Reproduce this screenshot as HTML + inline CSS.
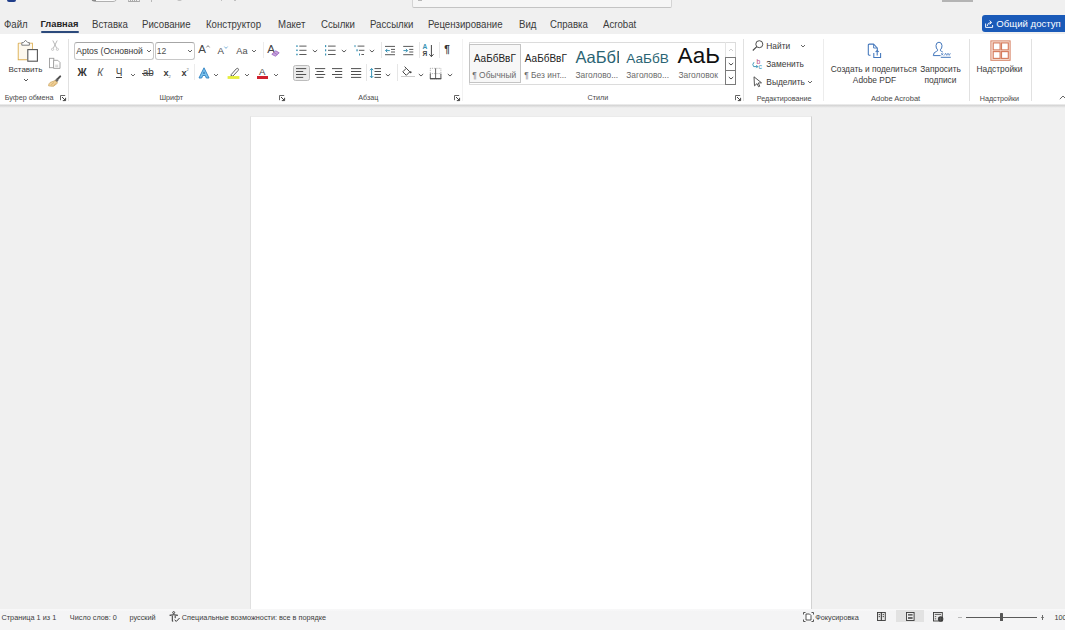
<!DOCTYPE html>
<html><head><meta charset="utf-8">
<style>
html,body{margin:0;padding:0;width:1065px;height:630px;overflow:hidden;background:#f0f0f0;position:relative;font-family:"Liberation Sans",sans-serif}
.a{position:absolute}
.t{position:absolute;white-space:nowrap;line-height:1;color:#424242}
.tab{font-size:10px;top:20px;color:#3b3b3b;transform:scaleX(0.965);transform-origin:0 0}
.btn{font-size:8.4px;color:#3a3a3a}
.gl{font-size:7.2px;top:94.2px;color:#4a4a4a}
.st{font-size:7.3px;top:614px;color:#3d3d3d}
.sep{position:absolute;width:1px;background:#e1e1e1}
svg{position:absolute;overflow:visible}
</style></head><body>
<!-- title/tab area -->
<div class="a" style="left:0;top:0;width:1065px;height:34px;background:#f0f0f0"></div>
<div class="a" style="left:7px;top:-3px;width:9px;height:5px;background:#1f3d8a;border-radius:0 0 2px 2px"></div>
<div class="a" style="left:89.5px;top:-8px;width:28px;height:10.3px;border:1px solid #b0b0b0;border-radius:6px;background:#fbfbfb;box-sizing:border-box"></div>
<div class="a" style="left:92px;top:0;width:4px;height:1px;background:#8a8a8a"></div>
<div class="a" style="left:127.5px;top:0;width:12px;height:2px;border-bottom:1px solid #a8a8a8;border-left:1px solid #b8b8b8;border-right:1px solid #b8b8b8;box-sizing:border-box"></div>
<div class="a" style="left:130px;top:0;width:7px;height:1.2px;background:repeating-linear-gradient(90deg,#aaa 0 1px,transparent 1px 2px)"></div>
<div class="a" style="left:150.5px;top:0;width:1px;height:1.5px;background:#b8b8b8"></div>
<div class="a" style="left:176px;top:-6px;width:7px;height:7px;border:1px solid #b0b0b0;border-radius:50%;box-sizing:border-box"></div>
<div class="a" style="left:221px;top:0;width:1px;height:1.3px;background:#c0c0c0"></div>
<div class="a" style="left:233.5px;top:0;width:2px;height:1.3px;background:#c0c0c0"></div>
<div class="a" style="left:412px;top:-6px;width:260px;height:13.5px;border:1px solid #d4d4d4;border-bottom-color:#c4c4c4;border-radius:2px;background:#f6f6f6;box-sizing:border-box"></div>
<div class="a" style="left:418px;top:0;width:4px;height:1.2px;background:#b8b8b8"></div>
<div class="a" style="left:942px;top:-2px;width:31px;height:3.5px;background:#b4b4b4"></div>

<div class="t tab" style="left:4px">Файл</div>
<div class="t tab" style="left:40.5px;font-weight:700;font-size:9.3px;top:20.2px;color:#242424;transform:none">Главная</div>
<div class="a" style="left:41px;top:31px;width:38px;height:1.8px;background:#2c4a7c;border-radius:1px"></div>
<div class="t tab" style="left:92.3px">Вставка</div>
<div class="t tab" style="left:141.5px">Рисование</div>
<div class="t tab" style="left:205.7px">Конструктор</div>
<div class="t tab" style="left:277.9px">Макет</div>
<div class="t tab" style="left:321.1px">Ссылки</div>
<div class="t tab" style="left:369.9px">Рассылки</div>
<div class="t tab" style="left:428.1px">Рецензирование</div>
<div class="t tab" style="left:518.7px">Вид</div>
<div class="t tab" style="left:550.2px">Справка</div>
<div class="t tab" style="left:603.2px">Acrobat</div>

<div class="a" style="left:982px;top:15px;width:90px;height:17px;background:#1a5ab8;border-radius:3px"></div>
<svg style="left:984.5px;top:19px" width="9" height="9" viewBox="0 0 9 9"><path d="M0.6 4.5 V8.4 H7.6 V6" fill="none" stroke="#fff" stroke-width="0.95"/><path d="M2.2 7 Q2.4 3.6 6 3.5 M4.6 1.6 L6.7 3.5 L4.6 5.3" fill="none" stroke="#fff" stroke-width="0.95"/></svg>
<div class="t" style="left:996.3px;top:18.8px;font-size:9.6px;color:#fff">Общий доступ</div>

<!-- ribbon -->
<div class="a" style="left:0;top:34px;width:1065px;height:71px;background:#fff"></div>
<div class="a" style="left:0;top:104px;width:1065px;height:4px;background:linear-gradient(#f4f4f4,#d6d6d6 35%,#dadada 50%,#e9e9e9 80%,#f0f0f0)"></div>

<!-- page -->
<div class="a" style="left:250px;top:116px;width:562px;height:493px;background:#fff;border-left:1px solid #e0e0e0;border-right:1px solid #d2d2d2;border-top:1px solid #ebebeb;box-sizing:border-box"></div>

<!-- status bar -->
<div class="a" style="left:0;top:609px;width:1065px;height:21px;background:#f4f4f5"></div>
<div class="a" style="left:0;top:609px;width:1065px;height:2px;background:linear-gradient(#f8f8f8,#f6f6f7)"></div>


<!-- Clipboard group -->
<svg style="left:0;top:0" width="1" height="1"></svg>
<svg style="left:17px;top:39px" width="22" height="24" viewBox="0 0 22 24">
  <path d="M1.3 4.3 H4.5 M12.5 4.3 H15.3 V10 M10 20.6 H1.3 V4.3" fill="#fdf8ee" stroke="#dcae52" stroke-width="1.1"/>
  <path d="M1.8 4.8 H15 V10.3 H10.3 V20.3 H1.8 Z" fill="#fdf8ee"/>
  <path d="M4.8 6.2 V3.6 H6.4 L8.6 1.3 L10.8 3.6 H12.4 V6.2 Z" fill="#fff" stroke="#777" stroke-width="0.95" stroke-linejoin="round"/>
  <rect x="10.8" y="10.6" width="9.6" height="11.6" fill="#fff" stroke="#555" stroke-width="1.1"/>
</svg>
<div class="t btn" style="left:8.5px;top:65.9px;font-size:8px">Вставить</div>
<svg style="left:23px;top:78px" width="6" height="4" viewBox="0 0 6 4"><path d="M1 1 L3 3 L5 1" fill="none" stroke="#555" stroke-width="1"/></svg>
<svg style="left:50px;top:40px" width="10" height="11" viewBox="0 0 10 11">
  <path d="M2.8 0.5 L6.6 8 M7.2 0.5 L3.4 8" stroke="#ababab" stroke-width="0.85" fill="none"/>
  <circle cx="2.6" cy="9.3" r="1.1" fill="none" stroke="#b8b8b8" stroke-width="0.8"/>
  <circle cx="7.4" cy="9.3" r="1.1" fill="none" stroke="#b8b8b8" stroke-width="0.8"/>
</svg>
<svg style="left:48px;top:57px" width="14" height="13" viewBox="0 0 14 13">
  <rect x="1.5" y="1.3" width="4.3" height="9.4" fill="#fff" stroke="#9c9c9c" stroke-width="0.9"/>
  <path d="M5.6 3.3 H9.8 L12 5.5 V11.4 H5.6 Z" fill="#fff" stroke="#9c9c9c" stroke-width="0.9"/>
  <path d="M7.2 8.2 H10.2 M7.2 9.7 H10.2" stroke="#b8b8b8" stroke-width="0.7"/>
</svg>
<svg style="left:47px;top:75px" width="15" height="12" viewBox="0 0 15 12">
  <path d="M13.2 1.4 L10.4 4.2" stroke="#505050" stroke-width="2" stroke-linecap="round"/>
  <path d="M10.6 4.6 L8.6 6.6" stroke="#6a6a6a" stroke-width="2.8"/>
  <path d="M8.2 5.6 L10.6 8 L6.6 11.2 Q3.8 11.4 1.5 10.8 Q1.6 8.6 3.2 7.4 Z" fill="#f0d098" stroke="#c9a05a" stroke-width="0.7" stroke-linejoin="round"/>
  <path d="M4.2 9.9 L7 7.4 M6.6 10.6 L8.8 8.6" stroke="#c9a05a" stroke-width="0.6"/>
</svg>
<div class="t gl" style="left:4.7px;top:94.4px">Буфер обмена</div>
<svg style="left:60px;top:95px" width="7" height="7" viewBox="0 0 7 7"><path d="M0.5 5.2 V0.5 H5.2" fill="none" stroke="#555" stroke-width="0.9"/><path d="M2 2 L5.3 5.3 M2.8 5.6 H5.6 V2.8" fill="none" stroke="#444" stroke-width="1"/></svg>
<div class="sep" style="left:68px;top:39px;height:62px"></div>

<!-- Font group -->
<div class="a" style="left:74px;top:42px;width:79.5px;height:17.5px;border:1px solid #c8c8c8;border-top-color:#a6a6a6;border-radius:3px;box-sizing:border-box"></div>
<div class="t btn" style="left:76.2px;top:47.2px;font-size:8.6px">Aptos (Основной</div>
<svg style="left:146px;top:49px" width="6" height="4" viewBox="0 0 6 4"><path d="M1 1 L3 3 L5 1" fill="none" stroke="#555" stroke-width="0.9"/></svg>
<div class="a" style="left:155px;top:42px;width:39.5px;height:17.5px;border:1px solid #c8c8c8;border-top-color:#a6a6a6;border-radius:3px;box-sizing:border-box"></div>
<div class="t btn" style="left:156.7px;top:46.9px;font-size:8.6px;color:#505050">12</div>
<svg style="left:187px;top:49px" width="6" height="4" viewBox="0 0 6 4"><path d="M1 1 L3 3 L5 1" fill="none" stroke="#555" stroke-width="0.9"/></svg>

<div class="t" style="left:198.3px;top:44.2px;font-size:11.5px;color:#444">A</div>
<svg style="left:206.3px;top:45.3px" width="4" height="3" viewBox="0 0 4 3"><path d="M0.4 2.4 L2 0.6 L3.6 2.4" fill="none" stroke="#666" stroke-width="0.8"/></svg>
<div class="t" style="left:217.6px;top:46.3px;font-size:9.7px;color:#444">A</div>
<svg style="left:224.3px;top:45.5px" width="4" height="3" viewBox="0 0 4 3"><path d="M0.4 0.6 L2 2.4 L3.6 0.6" fill="none" stroke="#5aa0d0" stroke-width="0.8"/></svg>
<div class="t" style="left:236.3px;top:46.8px;font-size:9.2px;color:#4a4a4a">Aa</div>
<svg style="left:251px;top:49px" width="6" height="4" viewBox="0 0 6 4"><path d="M1 1 L3 3 L5 1" fill="none" stroke="#555" stroke-width="0.9"/></svg>
<div class="sep" style="left:263px;top:42px;height:16px;background:#ececec"></div>
<div class="t" style="left:267.3px;top:44.2px;font-size:11.5px;color:#444">A</div>
<svg style="left:271px;top:49.5px" width="9" height="7" viewBox="0 0 9 7"><path d="M0.8 4.3 L4.8 0.8 L8.2 2.8 L4.5 6.2 Z" fill="#c7a6dc" stroke="#9a62c0" stroke-width="0.8"/><path d="M2.8 2.5 L6.3 4.7" stroke="#9a62c0" stroke-width="0.7"/></svg>

<div class="t" style="left:77.4px;top:68px;font-size:10.2px;font-weight:700;color:#333">Ж</div>
<div class="t" style="left:97.3px;top:68px;font-size:10px;font-style:italic;color:#555">К</div>
<div class="t" style="left:115.8px;top:67.8px;font-size:10px;color:#444">Ч</div>
<div class="a" style="left:115.8px;top:77px;width:6.5px;height:1px;background:#444"></div>
<svg style="left:129.5px;top:72.6px" width="6" height="4" viewBox="0 0 6 4"><path d="M1 1 L3 3 L5 1" fill="none" stroke="#555" stroke-width="0.9"/></svg>
<div class="t" style="left:142.8px;top:68.2px;font-size:10px;color:#444">ab</div>
<div class="a" style="left:141.8px;top:73.3px;width:11.6px;height:1px;background:#444"></div>
<div class="t" style="left:163.6px;top:68.8px;font-size:9.2px;font-weight:700;color:#3a3a3a">x</div><div class="t" style="left:168.6px;top:74.5px;font-size:4px;color:#666">2</div>
<div class="t" style="left:181.6px;top:68.8px;font-size:9.2px;font-weight:700;color:#3a3a3a">x</div><div class="t" style="left:186.6px;top:67.6px;font-size:4px;color:#666">2</div>
<div class="sep" style="left:194px;top:64px;height:16px;background:#ececec"></div>
<svg style="left:198px;top:67px" width="12" height="12" viewBox="0 0 12 12"><path d="M1 11 L6 0.8 L11 11 H8.3 L7.3 8.5 H4.7 L3.7 11 Z M5.3 6.5 H6.7 L6 4.8 Z" fill="#7cc4ee" stroke="#2d7fc0" stroke-width="0.9" stroke-linejoin="round"/></svg>
<svg style="left:213px;top:72.8px" width="6" height="4" viewBox="0 0 6 4"><path d="M1 1 L3 3 L5 1" fill="none" stroke="#555" stroke-width="0.9"/></svg>
<svg style="left:227px;top:67px" width="13" height="13" viewBox="0 0 13 13"><path d="M4.2 7.6 L9.3 1.8 Q10.4 0.9 11.2 1.7 Q11.9 2.6 11 3.6 L6 9 L4.6 9.4 Z" fill="#fff" stroke="#505050" stroke-width="0.9" stroke-linejoin="round"/><path d="M4.4 8.6 L2.8 9.8" stroke="#505050" stroke-width="0.9"/><rect x="0.6" y="9.1" width="11.8" height="2.8" fill="#e6ee3c"/></svg>
<svg style="left:244px;top:72.8px" width="6" height="4" viewBox="0 0 6 4"><path d="M1 1 L3 3 L5 1" fill="none" stroke="#555" stroke-width="0.9"/></svg>
<div class="t" style="left:258.9px;top:67px;font-size:9.6px;color:#444">A</div>
<div class="a" style="left:256.7px;top:76.3px;width:11.5px;height:2.6px;background:#d0202e"></div>
<svg style="left:273px;top:72.8px" width="6" height="4" viewBox="0 0 6 4"><path d="M1 1 L3 3 L5 1" fill="none" stroke="#555" stroke-width="0.9"/></svg>
<div class="t gl" style="left:159.5px">Шрифт</div>
<svg style="left:279px;top:95px" width="7" height="7" viewBox="0 0 7 7"><path d="M0.5 5.2 V0.5 H5.2" fill="none" stroke="#555" stroke-width="0.9"/><path d="M2 2 L5.3 5.3 M2.8 5.6 H5.6 V2.8" fill="none" stroke="#444" stroke-width="1"/></svg>

<svg style="left:295px;top:44px" width="14" height="13" viewBox="0 0 14 13"><rect x="1.2" y="1.35" width="1.5" height="1.5" fill="#3a93b5"/><rect x="4.3" y="1.6" width="7.2" height="1" fill="#5a5a5a"/><rect x="1.2" y="5.55" width="1.5" height="1.5" fill="#3a93b5"/><rect x="4.3" y="5.8" width="7.2" height="1" fill="#5a5a5a"/><rect x="1.2" y="9.75" width="1.5" height="1.5" fill="#3a93b5"/><rect x="4.3" y="10.0" width="7.2" height="1" fill="#5a5a5a"/></svg><svg style="left:312px;top:49.3px" width="6" height="4" viewBox="0 0 6 4"><path d="M0.8 1 L3 3 L5.2 1" fill="none" stroke="#505050" stroke-width="0.95"/></svg><svg style="left:324px;top:44px" width="13" height="13" viewBox="0 0 13 13"><rect x="1" y="1.1" width="1.2" height="2" fill="#3a93b5"/><rect x="4" y="1.6" width="7.6" height="1" fill="#5a5a5a"/><rect x="1" y="5.3" width="1.2" height="2" fill="#3a93b5"/><rect x="4" y="5.8" width="7.6" height="1" fill="#5a5a5a"/><rect x="1" y="9.5" width="1.2" height="2" fill="#3a93b5"/><rect x="4" y="10.0" width="7.6" height="1" fill="#5a5a5a"/></svg><svg style="left:341px;top:49.3px" width="6" height="4" viewBox="0 0 6 4"><path d="M0.8 1 L3 3 L5.2 1" fill="none" stroke="#505050" stroke-width="0.95"/></svg><svg style="left:353px;top:44px" width="13" height="13" viewBox="0 0 13 13"><rect x="1.5" y="1.1" width="1" height="2" fill="#3a93b5"/><rect x="4.6" y="1.6" width="6.800000000000001" height="1" fill="#5a5a5a"/><rect x="3.4" y="5.3" width="1.3" height="2" fill="#3a93b5"/><rect x="5.9" y="5.8" width="5.5" height="1" fill="#5a5a5a"/><rect x="6" y="9.5" width="1" height="2" fill="#3a93b5"/><rect x="8.4" y="10.0" width="2.5999999999999996" height="1" fill="#5a5a5a"/></svg><svg style="left:369px;top:49.3px" width="6" height="4" viewBox="0 0 6 4"><path d="M0.8 1 L3 3 L5.2 1" fill="none" stroke="#505050" stroke-width="0.95"/></svg><div class="sep" style="left:380.5px;top:42px;height:16px;background:#e6e6e6"></div><svg style="left:384px;top:44px" width="12" height="12" viewBox="0 0 12 12"><rect x="1" y="1.9" width="10" height="1" fill="#5a5a5a"/><rect x="7" y="4.9" width="4" height="1" fill="#5a5a5a"/><rect x="7" y="7.5" width="4" height="1" fill="#5a5a5a"/><rect x="1" y="10.2" width="10" height="1" fill="#5a5a5a"/><path d="M5.8 6.6 H1.6 M3.3 4.9 L1.6 6.6 L3.3 8.3" fill="none" stroke="#3a93b5" stroke-width="1"/></svg><svg style="left:402px;top:44px" width="12" height="12" viewBox="0 0 12 12"><rect x="1.2" y="1.9" width="10.100000000000001" height="1" fill="#5a5a5a"/><rect x="7.2" y="4.9" width="4.1000000000000005" height="1" fill="#5a5a5a"/><rect x="7.2" y="7.5" width="4.1000000000000005" height="1" fill="#5a5a5a"/><rect x="1.2" y="10.2" width="10.100000000000001" height="1" fill="#5a5a5a"/><path d="M1.4 6.6 H5.6 M3.9 4.9 L5.6 6.6 L3.9 8.3" fill="none" stroke="#3a93b5" stroke-width="1"/></svg><div class="sep" style="left:419px;top:42px;height:16px;background:#e6e6e6"></div><div class="t" style="left:422.4px;top:44.2px;font-size:6.6px;color:#3a93b5;font-weight:700">A</div><div class="t" style="left:422.6px;top:51.4px;font-size:6.6px;color:#444;font-weight:700">Я</div><svg style="left:428px;top:44px" width="7" height="14" viewBox="0 0 7 14"><path d="M3.4 1 V12.6 M1.3 10.3 L3.4 12.6 L5.5 10.3" fill="none" stroke="#444" stroke-width="1"/></svg><div class="sep" style="left:438.5px;top:42px;height:16px;background:#e6e6e6"></div><div class="t" style="left:444.3px;top:45.2px;font-size:10px;color:#333;font-weight:700">¶</div><div class="a" style="left:293.4px;top:65px;width:16.5px;height:16.4px;background:#ebebeb;border:1px solid #bcbcbc;border-radius:2.5px;box-sizing:border-box"></div><svg style="left:296.3px;top:66px" width="12" height="14" viewBox="0 0 12 14"><rect x="0" y="2.1" width="10.2" height="1" fill="#505050"/><rect x="0" y="5.0" width="7.2" height="1" fill="#505050"/><rect x="0" y="8.0" width="10.2" height="1" fill="#505050"/><rect x="0" y="10.9" width="7.2" height="1" fill="#505050"/></svg><svg style="left:314.5px;top:66px" width="12" height="14" viewBox="0 0 12 14"><rect x="0.0" y="2.1" width="10.2" height="1" fill="#505050"/><rect x="1.4999999999999996" y="5.0" width="7.199999999999999" height="1" fill="#505050"/><rect x="0.0" y="8.0" width="10.2" height="1" fill="#505050"/><rect x="1.4999999999999996" y="10.9" width="7.199999999999999" height="1" fill="#505050"/></svg><svg style="left:332.3px;top:66px" width="12" height="14" viewBox="0 0 12 14"><rect x="0.0" y="2.1" width="10.2" height="1" fill="#505050"/><rect x="2.999999999999999" y="5.0" width="7.2" height="1" fill="#505050"/><rect x="0.0" y="8.0" width="10.2" height="1" fill="#505050"/><rect x="2.999999999999999" y="10.9" width="7.2" height="1" fill="#505050"/></svg><svg style="left:350.8px;top:66px" width="12" height="14" viewBox="0 0 12 14"><rect x="0" y="2.1" width="10.2" height="1" fill="#505050"/><rect x="0" y="5.0" width="10.2" height="1" fill="#505050"/><rect x="0" y="8.0" width="10.2" height="1" fill="#505050"/><rect x="0" y="10.9" width="10.2" height="1" fill="#505050"/></svg><div class="sep" style="left:365.5px;top:64px;height:17px;background:#e6e6e6"></div><svg style="left:369px;top:66px" width="13" height="14" viewBox="0 0 13 14"><path d="M2.6 2.5 V11.8 M1 4.2 L2.6 2.5 L4.2 4.2 M1 10.1 L2.6 11.8 L4.2 10.1" fill="none" stroke="#3a93b5" stroke-width="1"/><rect x="5.5" y="2.1" width="6.5" height="1" fill="#505050"/><rect x="5.5" y="5.0" width="6.5" height="1" fill="#505050"/><rect x="5.5" y="8.0" width="6.5" height="1" fill="#505050"/><rect x="5.5" y="10.9" width="6.5" height="1" fill="#505050"/></svg><svg style="left:385.2px;top:72.8px" width="6" height="4" viewBox="0 0 6 4"><path d="M0.8 1 L3 3 L5.2 1" fill="none" stroke="#505050" stroke-width="0.95"/></svg><div class="sep" style="left:396.5px;top:64px;height:17px;background:#e6e6e6"></div><svg style="left:400px;top:66px" width="16" height="12" viewBox="0 0 16 12"><path d="M2.8 5.8 L6.3 2.3 L9.8 5.8 L6.3 9.3 Z" fill="#fff" stroke="#444" stroke-width="1"/><path d="M6.3 2.3 L4.6 0.6" stroke="#444" stroke-width="1"/><circle cx="10.6" cy="6.2" r="1" fill="#444"/><rect x="1" y="10" width="14" height="0.9" fill="#c8c8c8"/></svg><svg style="left:417.5px;top:72.8px" width="6" height="4" viewBox="0 0 6 4"><path d="M0.8 1 L3 3 L5.2 1" fill="none" stroke="#505050" stroke-width="0.95"/></svg><svg style="left:429px;top:67px" width="13" height="13" viewBox="0 0 13 13"><rect x="1.3" y="1.3" width="10.6" height="10.6" fill="none" stroke="#9a9a9a" stroke-width="0.8" stroke-dasharray="0.9 0.9"/><path d="M1.3 6.6 H11.9" stroke="#9a9a9a" stroke-width="0.8" stroke-dasharray="0.9 0.9"/><path d="M6.6 1.3 V11.9" stroke="#555" stroke-width="0.9"/><path d="M1 11.7 H12.2" stroke="#444" stroke-width="1.2"/><path d="M1.3 6.6 V11.9 M11.9 6.6 V11.9" stroke="#555" stroke-width="0.9"/></svg><svg style="left:446.5px;top:72.8px" width="6" height="4" viewBox="0 0 6 4"><path d="M0.8 1 L3 3 L5.2 1" fill="none" stroke="#505050" stroke-width="0.95"/></svg><div class="t gl" style="left:358.3px">Абзац</div><svg style="left:454px;top:95px" width="7" height="7" viewBox="0 0 7 7"><path d="M0.5 5.2 V0.5 H5.2" fill="none" stroke="#555" stroke-width="0.9"/><path d="M2 2 L5.3 5.3 M2.8 5.6 H5.6 V2.8" fill="none" stroke="#444" stroke-width="1"/></svg><div class="sep" style="left:461.5px;top:39px;height:62px;background:#f2f2f2"></div><div class="a" style="left:468.5px;top:42px;width:267px;height:42.5px;border:1px solid #dcdcdc;box-sizing:border-box;background:#fff"></div><div class="a" style="left:469px;top:43.5px;width:51.5px;height:39px;border:1px solid #c4c4c4;box-sizing:border-box;background:#f7f7f7"></div><div class="t" style="left:473.8px;top:53.8px;font-size:10px;color:#222">АаБбВвГ</div><div class="t" style="left:472.3px;top:71.2px;font-size:8.4px;color:#6a6a6a">¶ Обычный</div><div class="t" style="left:524.8px;top:53.8px;font-size:10px;color:#222">АаБбВвГ</div><div class="t" style="left:524.3px;top:71.2px;font-size:8.4px;color:#6a6a6a">¶ Без инт...</div><div class="a" style="left:575px;top:45px;width:44px;height:22px;overflow:hidden"><div class="t" style="left:0.4px;top:3.5px;font-size:16.5px;color:#2a6473">АаБбВ</div></div><div class="t" style="left:575.5px;top:71.2px;font-size:8.4px;color:#6a6a6a">Заголово...</div><div class="t" style="left:626.3px;top:51.6px;font-size:13.6px;color:#2a6473">АаБбВ</div><div class="t" style="left:626.3px;top:71.2px;font-size:8.4px;color:#6a6a6a">Заголово...</div><div class="t" style="left:677.6px;top:44.9px;font-size:22.5px;color:#111">АаЬ</div><div class="t" style="left:678.5px;top:71.2px;font-size:8.4px;color:#6a6a6a">Заголовок</div><div class="a" style="left:725px;top:42px;width:10.5px;height:42.5px;border-left:1px solid #e4e4e4;box-sizing:border-box"></div><svg style="left:727.5px;top:48px" width="6" height="4" viewBox="0 0 6 4"><path d="M1 3 L3 1 L5 3" fill="none" stroke="#c8c8c8" stroke-width="0.9"/></svg><div class="a" style="left:725px;top:57px;width:10.8px;height:27.6px;border:1px solid #7a7a7a;box-sizing:border-box;background:#fff"></div>
<div class="a" style="left:725px;top:70px;width:10.8px;height:1px;background:#7a7a7a"></div>
<svg style="left:727.6px;top:62.3px" width="6" height="4" viewBox="0 0 6 4"><path d="M0.8 1 L3 3 L5.2 1" fill="none" stroke="#444" stroke-width="0.95"/></svg>
<svg style="left:727.6px;top:76px" width="6" height="4" viewBox="0 0 6 4"><path d="M0.8 1 L3 3 L5.2 1" fill="none" stroke="#444" stroke-width="0.95"/></svg>
<div class="t gl" style="left:587.5px">Стили</div><svg style="left:734.5px;top:95px" width="7" height="7" viewBox="0 0 7 7"><path d="M0.5 5.2 V0.5 H5.2" fill="none" stroke="#555" stroke-width="0.9"/><path d="M2 2 L5.3 5.3 M2.8 5.6 H5.6 V2.8" fill="none" stroke="#444" stroke-width="1"/></svg><div class="sep" style="left:743px;top:39px;height:62px"></div><svg style="left:752px;top:39.5px" width="12" height="11" viewBox="0 0 12 11"><circle cx="7.3" cy="4.2" r="3.5" fill="none" stroke="#444" stroke-width="0.95"/><path d="M4.8 6.7 L0.8 10.5" stroke="#444" stroke-width="1.1"/></svg><div class="t btn" style="left:766.3px;top:41.8px">Найти</div><svg style="left:799.5px;top:44px" width="6" height="4" viewBox="0 0 6 4"><path d="M1 1 L3 3 L5 1" fill="none" stroke="#555" stroke-width="0.9"/></svg><svg style="left:751px;top:57.5px" width="13" height="12" viewBox="0 0 13 12"><text x="5.4" y="5.6" font-size="6.8" fill="#b5487a" font-family="Liberation Sans">b</text><text x="7.6" y="11.3" font-size="6.8" fill="#3a93b5" font-family="Liberation Sans">c</text><path d="M3 4.2 Q0.8 6.5 2.6 8.6 H6.8 M5.3 7.1 L6.8 8.6 L5.3 10.1" fill="none" stroke="#3a93b5" stroke-width="0.95"/></svg><div class="t btn" style="left:766.3px;top:60.2px">Заменить</div><svg style="left:752.5px;top:76px" width="10" height="11" viewBox="0 0 10 11"><path d="M1 0.8 L8.5 6.8 L5.2 7 L6.8 10.2 L5.5 10.7 L4 7.6 L1.5 9.8 Z" fill="#fff" stroke="#444" stroke-width="0.9" stroke-linejoin="round"/></svg><div class="t btn" style="left:766.3px;top:78px">Выделить</div><svg style="left:806.5px;top:80px" width="6" height="4" viewBox="0 0 6 4"><path d="M1 1 L3 3 L5 1" fill="none" stroke="#555" stroke-width="0.9"/></svg><div class="t gl" style="left:756.8px;top:95.3px">Редактирование</div><div class="sep" style="left:823px;top:39px;height:62px;background:#ececec"></div><svg style="left:867px;top:43px" width="16" height="16" viewBox="0 0 16 16"><path d="M3.5 12.2 H2.3 Q1.3 12.2 1.3 11.2 V2.1 Q1.3 1.1 2.3 1.1 H6.6 L10.3 5 V8" fill="none" stroke="#4276bb" stroke-width="1.05" stroke-linejoin="round"/><path d="M6.6 1.1 V5 H10.3" fill="none" stroke="#4276bb" stroke-width="0.9"/><path d="M6.8 10 V14.5 H13.6 V10" fill="none" stroke="#4276bb" stroke-width="1.05"/><path d="M10.2 12.6 V7.4 M8.6 9 L10.2 7.4 L11.8 9" fill="none" stroke="#4276bb" stroke-width="1.05"/></svg><div class="t btn" style="left:830.8px;top:64.6px">Создать и поделиться</div><div class="t btn" style="left:852.8px;top:75.8px">Adobe PDF</div><svg style="left:932px;top:41px" width="20" height="18" viewBox="0 0 20 18"><path d="M1.3 14.6 Q1.4 11.2 4.6 10.3 Q5.9 9.9 5.6 8.8 Q3.9 7.3 4 4.6 Q4.2 1.3 7 1.2 Q9.8 1.3 10 4.6 Q10.1 7.3 8.4 8.8 Q8.1 9.9 9.4 10.3 Q10.3 10.6 10.9 11.2" fill="none" stroke="#4276bb" stroke-width="1"/><path d="M1.3 14.6 H8.5" stroke="#4276bb" stroke-width="1"/><path d="M9.2 12.2 L11.2 14.4 M11.2 12.2 L9.2 14.4" stroke="#4276bb" stroke-width="0.8"/><path d="M12.4 14.4 L13.6 12.2 L14.8 14.4 L16 12.2 L17.2 14.4 L18.4 12.2" fill="none" stroke="#4276bb" stroke-width="0.7"/><path d="M8.8 16.3 H18.8" stroke="#4276bb" stroke-width="1"/></svg><div class="t btn" style="left:920.3px;top:64.6px">Запросить</div><div class="t btn" style="left:924.5px;top:75.8px">подписи</div><div class="t gl" style="left:871px;top:95.2px;font-size:7.5px">Adobe Acrobat</div><div class="sep" style="left:968.5px;top:39px;height:62px"></div><svg style="left:989.5px;top:39.5px" width="21" height="21" viewBox="0 0 21 21"><rect x="0.9" y="0.9" width="19.2" height="19.4" fill="#fcebe1" stroke="#d8876a" stroke-width="1.05"/><rect x="3.2" y="2.9" width="6.9" height="7" fill="#fff" stroke="#d67c5e" stroke-width="1.15"/><rect x="11.5" y="2.9" width="6.8" height="7" fill="#fff" stroke="#d67c5e" stroke-width="1.15"/><rect x="3.2" y="11.6" width="6.9" height="6.8" fill="#fff" stroke="#d67c5e" stroke-width="1.15"/><rect x="11.5" y="11.6" width="6.8" height="6.8" fill="#fff" stroke="#d67c5e" stroke-width="1.15"/></svg><div class="t btn" style="left:976.5px;top:64.8px">Надстройки</div><div class="t gl" style="left:979.7px;top:95.3px">Надстройки</div><div class="sep" style="left:1030.5px;top:39px;height:62px"></div><svg style="left:1058.5px;top:95px" width="8" height="5" viewBox="0 0 8 5"><path d="M0.8 4.2 L4 1 L7.2 4.2" fill="none" stroke="#555" stroke-width="0.9"/></svg>
<div class="t st" style="left:1.5px">Страница 1 из 1</div><div class="t st" style="left:69.8px">Число слов: 0</div><div class="t st" style="left:129.5px">русский</div><svg style="left:169px;top:611px" width="12" height="12" viewBox="0 0 12 12"><circle cx="4.7" cy="1.6" r="1" fill="none" stroke="#333" stroke-width="0.9"/><path d="M0.6 4.4 Q4.7 3.2 8.8 4.4" fill="none" stroke="#333" stroke-width="1.1"/><path d="M3.3 4.6 V10.2 H4.2 M6.2 4.6 V7.2" fill="none" stroke="#333" stroke-width="1"/><path d="M5.6 8.9 L7.3 10.4 L10.6 7" fill="none" stroke="#333" stroke-width="1"/></svg><div class="t st" style="left:181.8px">Специальные возможности: все в порядке</div><svg style="left:803px;top:612px" width="11" height="10" viewBox="0 0 11 10"><path d="M0.5 2.5 V0.5 H2.5 M8.5 0.5 H10.5 V2.5 M10.5 7.5 V9.5 H8.5 M2.5 9.5 H0.5 V7.5" fill="none" stroke="#444" stroke-width="0.9"/><path d="M3 2 H6.5 L8 3.5 V8 H3 Z" fill="#fff" stroke="#444" stroke-width="0.9"/></svg><div class="t st" style="left:815.2px">Фокусировка</div><svg style="left:877px;top:612px" width="9" height="9" viewBox="0 0 9 9"><rect x="0.5" y="0.5" width="3.8" height="8" fill="#e6e6e6" stroke="#3a3a3a" stroke-width="0.9"/><rect x="4.4" y="0.5" width="3.9" height="8" fill="#e6e6e6" stroke="#3a3a3a" stroke-width="0.9"/><path d="M1.7 2.6 H3 M1.7 4.6 H3 M5.7 2.6 H7 M5.7 4.6 H7" stroke="#3a3a3a" stroke-width="0.9"/></svg>
<div class="a" style="left:896px;top:610.3px;width:28px;height:11.6px;background:#e2e2e2"></div>
<svg style="left:905.8px;top:612px" width="9" height="9" viewBox="0 0 9 9"><rect x="0.5" y="0.5" width="7.6" height="8" fill="#ececec" stroke="#3a3a3a" stroke-width="0.9"/><path d="M2 2.8 H6.6 M2 6 H6.6" stroke="#3a3a3a" stroke-width="1.3"/></svg>
<svg style="left:933px;top:612px" width="11" height="10" viewBox="0 0 11 10"><rect x="0.5" y="0.5" width="8.8" height="8.5" fill="#eaeaea" stroke="#3a3a3a" stroke-width="0.9"/><path d="M1.8 2.4 H8 M1.8 4.6 H3.2 M1.8 6.8 H3.2" stroke="#3a3a3a" stroke-width="0.8"/><circle cx="7.6" cy="7" r="2.7" fill="#3a3a3a"/><path d="M5 7 H10.2 M7.6 4.4 V9.6" stroke="#777" stroke-width="0.4"/></svg>
<div class="a" style="left:957.5px;top:617px;width:4px;height:0.8px;background:#bbb"></div><div class="a" style="left:966px;top:617px;width:70.5px;height:0.9px;background:#5a5a5a"></div><div class="a" style="left:1000.3px;top:613px;width:2.7px;height:8px;background:#555;border-radius:0.5px"></div><div class="a" style="left:1040.6px;top:617px;width:3.2px;height:0.8px;background:#8a8a8a"></div><div class="a" style="left:1041.8px;top:614.6px;width:0.9px;height:5px;background:#6a6a6a"></div><div class="t st" style="left:1054.5px">100%</div>
</body></html>
